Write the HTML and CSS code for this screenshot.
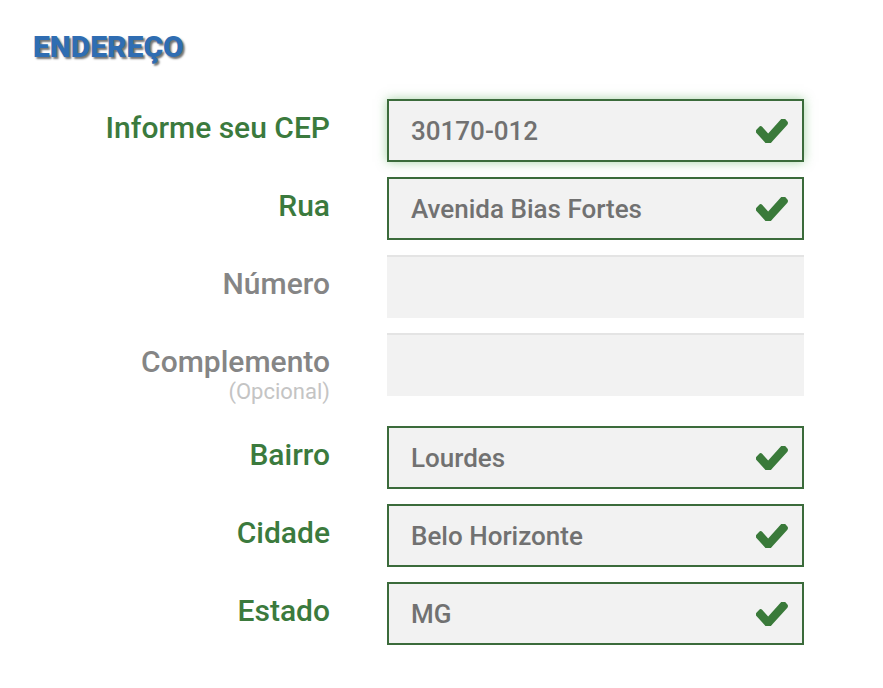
FILE: index.html
```html
<!DOCTYPE html>
<html lang="pt-BR">
<head>
<meta charset="utf-8">
<title>Endereço</title>
<link rel="stylesheet" href="styles.css">
</head>
<body>
<section class="address">
  <h2 class="title">ENDEREÇO</h2>
  <div class="form">
    <div class="row">
      <label class="label ok">Informe seu CEP</label>
      <div class="field valid focus"><span class="value">30170-012</span><svg class="check" viewBox="128 390 1543 1040" preserveAspectRatio="none"><path d="M1671 566q0 40-28 68l-724 724-136 136q-28 28-68 28t-68-28l-136-136-362-362q-28-28-28-68t28-68l136-136q28-28 68-28t68 28l294 295 656-657q28-28 68-28t68 28l136 136q28 28 28 68z"/></svg></div>
    </div>
    <div class="row">
      <label class="label ok">Rua</label>
      <div class="field valid"><span class="value">Avenida Bias Fortes</span><svg class="check" viewBox="128 390 1543 1040" preserveAspectRatio="none"><path d="M1671 566q0 40-28 68l-724 724-136 136q-28 28-68 28t-68-28l-136-136-362-362q-28-28-28-68t28-68l136-136q28-28 68-28t68 28l294 295 656-657q28-28 68-28t68 28l136 136q28 28 28 68z"/></svg></div>
    </div>
    <div class="row">
      <label class="label">Número</label>
      <div class="field empty"></div>
    </div>
    <div class="row">
      <label class="label">Complemento<span class="opt">(Opcional)</span></label>
      <div class="field empty"></div>
    </div>
    <div class="row">
      <label class="label ok">Bairro</label>
      <div class="field valid"><span class="value">Lourdes</span><svg class="check" viewBox="128 390 1543 1040" preserveAspectRatio="none"><path d="M1671 566q0 40-28 68l-724 724-136 136q-28 28-68 28t-68-28l-136-136-362-362q-28-28-28-68t28-68l136-136q28-28 68-28t68 28l294 295 656-657q28-28 68-28t68 28l136 136q28 28 28 68z"/></svg></div>
    </div>
    <div class="row">
      <label class="label ok">Cidade</label>
      <div class="field valid"><span class="value">Belo Horizonte</span><svg class="check" viewBox="128 390 1543 1040" preserveAspectRatio="none"><path d="M1671 566q0 40-28 68l-724 724-136 136q-28 28-68 28t-68-28l-136-136-362-362q-28-28-28-68t28-68l136-136q28-28 68-28t68 28l294 295 656-657q28-28 68-28t68 28l136 136q28 28 28 68z"/></svg></div>
    </div>
    <div class="row">
      <label class="label ok">Estado</label>
      <div class="field valid"><span class="value">MG</span><svg class="check" viewBox="128 390 1543 1040" preserveAspectRatio="none"><path d="M1671 566q0 40-28 68l-724 724-136 136q-28 28-68 28t-68-28l-136-136-362-362q-28-28-28-68t28-68l136-136q28-28 68-28t68 28l294 295 656-657q28-28 68-28t68 28l136 136q28 28 28 68z"/></svg></div>
    </div>
  </div>
</section>
</body>
</html>
```

FILE: styles.css
```css
* { box-sizing: border-box; }
html, body { margin: 0; padding: 0; background: #fff; }
body { font-family: Roboto, "Liberation Sans", sans-serif; }

.address { padding: 29px 0 0 0; }

.title {
  margin: 0 0 34px 33px;
  font-size: 30px;
  line-height: 36px;
  font-weight: 900;
  color: #2f6db2;
  text-shadow: 2px 2px 2px rgba(0, 0, 0, 0.55);
}

.form { display: flex; flex-direction: column; gap: 15px; }

.row { display: flex; align-items: flex-start; }

.label {
  width: 330px;
  flex: none;
  text-align: right;
  padding-top: 12px;
  font-size: 30px;
  line-height: 34px;
  font-weight: 500;
  color: #858585;
}
.label.ok { color: #3b7a3d; }

.opt {
  display: block;
  font-size: 22px;
  line-height: 26px;
  font-weight: 400;
  color: #c4c4c4;
  padding-bottom: 6px;
}

.field {
  margin-left: 57px;
  width: 417px;
  height: 63px;
  flex: none;
  display: flex;
  align-items: center;
  justify-content: space-between;
  padding: 0 14px 0 22px;
  background: #f2f2f2;
}
.field.valid { border: 2px solid #3b6b3b; }
.field.focus { box-shadow: 0 0 10px rgba(80, 170, 80, 0.5); }
.field.empty { box-shadow: inset 0 2px 0 #e4e4e4; }

.value {
  font-size: 26px;
  font-weight: 500;
  color: #717171;
}

.check {
  width: 32px;
  height: 24px;
  fill: #3a7a3a;
}
```
